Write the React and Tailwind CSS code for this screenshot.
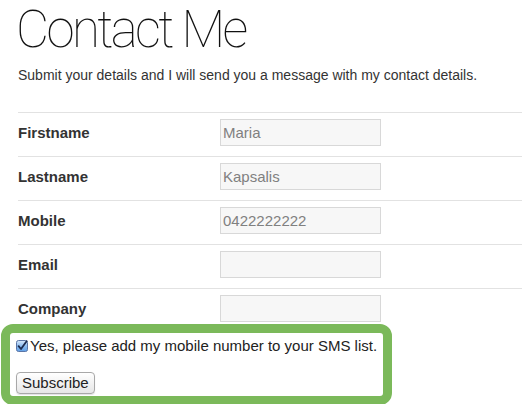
import { useState } from "react";

const fields = [
  { label: "Firstname", value: "Maria" },
  { label: "Lastname", value: "Kapsalis" },
  { label: "Mobile", value: "0422222222" },
  { label: "Email", value: "" },
  { label: "Company", value: "" },
];

function MacCheckbox({ checked, onChange }) {
  return (
    <button
      type="button"
      onClick={() => onChange(!checked)}
      className="flex h-[12px] w-[12px] shrink-0 items-center justify-center"
    >
      <svg width="12" height="12" viewBox="0 0 12 12">
        <defs>
          <linearGradient id="cbFill" x1="0" y1="0" x2="0" y2="1">
            <stop offset="0" stopColor="#d9e9fb" />
            <stop offset="0.5" stopColor="#8ebdf0" />
            <stop offset="1" stopColor="#5d9ee6" />
          </linearGradient>
        </defs>
        <rect x="0.5" y="0.5" width="11" height="11" rx="2" fill={checked ? "url(#cbFill)" : "#fff"} stroke="#5a75a6" />
        {checked && (
          <path d="M2.6 6.2 L5 9 L10.6 1.2" fill="none" stroke="#1c2b4f" strokeWidth="1.8" strokeLinecap="round" strokeLinejoin="round" />
        )}
      </svg>
    </button>
  );
}

export default function App() {
  const [values, setValues] = useState(() => fields.map((f) => f.value));
  const [sms, setSms] = useState(true);

  return (
    <div className="min-h-[404px] overflow-hidden bg-white pl-[18px] font-['Liberation_Sans',Arial,sans-serif] text-[#333]">
      <h1 className="-ml-[2px] pt-[4px] font-['Roboto',sans-serif] text-[51px] font-thin leading-[52px] tracking-[-2.6px] text-[#111]">
        Contact Me
      </h1>
      <p className="mt-[9px] text-[14px] leading-[20px]">
        Submit your details and I will send you a message with my contact details.
      </p>

      <div className="mt-[27px]">
        {fields.map((field, i) => (
          <div
            key={field.label}
            className="flex items-center border-t border-[#e2e2e2] pt-[6px] pb-[10px]"
          >
            <label className="w-[202px] text-[15px] font-bold leading-[18px] text-[#333]">
              {field.label}
            </label>
            <input
              value={values[i]}
              onChange={(e) =>
                setValues((prev) => prev.map((v, j) => (j === i ? e.target.value : v)))
              }
              className="h-[27px] w-[161px] border border-[#d8d8d8] bg-[#f7f7f7] px-[2px] text-[15px] text-[#808080] outline-none"
            />
          </div>
        ))}
      </div>

      <div className="-mt-[8px] -ml-[17px] w-[391px] rounded-[12px] border-[9px] border-[#7bb95a] bg-white pl-[6px] pt-[4px] pb-[1px]">
        <label className="flex h-[18px] items-center gap-[2px] whitespace-nowrap text-[15px] leading-[18px] text-[#222]">
          <MacCheckbox checked={sms} onChange={setSms} />
          <span>Yes, please add my mobile number to your SMS list.</span>
        </label>
        <button
          type="button"
          className="mt-[17px] h-[22px] rounded-[4px] border border-[#a8a8a8] bg-gradient-to-b from-white to-[#e6e6e6] px-[5px] text-[15px] leading-[18px] text-[#222] shadow-[0_1px_1px_rgba(0,0,0,0.12)]"
        >
          Subscribe
        </button>
      </div>
    </div>
  );
}
